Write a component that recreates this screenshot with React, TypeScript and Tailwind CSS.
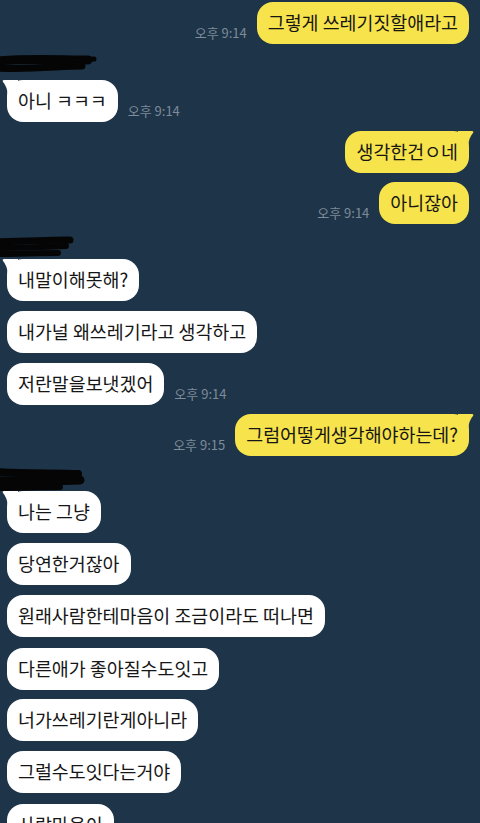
import React from 'react'

type Msg = {
  text: string
  me?: boolean
  time?: string
  tail?: boolean
  mt: number
}

const font = { fontFamily: '"Noto Sans CJK KR", "Noto Sans", sans-serif' }

const Tail = ({ me }: { me?: boolean }) =>
  me ? (
    <svg className="absolute -right-[5px] top-0" width="16" height="16" viewBox="0 0 16 16">
      <path d="M0 0 H14 Q16 0 15 2 Q11 6 10 16 H0 Z" fill="#f7e34b" />
    </svg>
  ) : (
    <svg className="absolute -left-[5px] top-0" width="16" height="16" viewBox="0 0 16 16">
      <path d="M16 0 H2 Q0 0 1 2 Q5 6 6 16 H16 Z" fill="#ffffff" />
    </svg>
  )

const Bubble = ({ m }: { m: Msg }) => (
  <div
    className={`flex items-end gap-[10px] ${m.me ? 'flex-row-reverse pr-[11px]' : 'pl-[7px]'}`}
    style={{ marginTop: m.mt }}
  >
    <div
      className={`relative flex h-[42px] items-center rounded-[16px] px-[11px] text-[18.4px] text-[#161616] ${
        m.me ? 'bg-[#f7e34b]' : 'bg-white'
      }`}
    >
      {m.tail && <Tail me={m.me} />}
      <span className="relative whitespace-nowrap">{m.text}</span>
    </div>
    {m.time && <span className="mb-[2px] text-[13px] text-[#7d8b9a]">{m.time}</span>}
  </div>
)

const Scribble = ({ variant }: { variant: number }) => {
  if (variant === 0)
    return (
      <svg width="100" height="36" viewBox="0 0 100 36" className="block">
        <path d="M-4 17 C30 14 60 16 88 16" stroke="#050505" strokeWidth="9" strokeLinecap="round" fill="none" />
        <path d="M-4 24 C30 26 60 22 82 22" stroke="#050505" strokeWidth="7" strokeLinecap="round" fill="none" />
        <path d="M70 16 L94 15" stroke="#050505" strokeWidth="5" strokeLinecap="round" />
      </svg>
    )
  if (variant === 1)
    return (
      <svg width="80" height="35" viewBox="0 0 80 35" className="block">
        <path d="M-4 18 C25 17 50 16 70 16" stroke="#050505" strokeWidth="7" strokeLinecap="round" fill="none" />
        <path d="M-4 24 C20 24 45 23 66 22" stroke="#050505" strokeWidth="6" strokeLinecap="round" fill="none" />
        <path d="M-4 30 C15 30 40 29 58 29" stroke="#050505" strokeWidth="6" strokeLinecap="round" fill="none" />
      </svg>
    )
  return (
    <svg width="90" height="35" viewBox="0 0 90 35" className="block">
      <path d="M-4 16 C25 18 55 17 78 18" stroke="#050505" strokeWidth="8" strokeLinecap="round" fill="none" />
      <path d="M-4 25 C25 26 55 25 80 24" stroke="#050505" strokeWidth="9" strokeLinecap="round" fill="none" />
      <path d="M-4 32 C20 32 40 31 60 31" stroke="#050505" strokeWidth="6" strokeLinecap="round" fill="none" />
    </svg>
  )
}

export default function App() {
  return (
    <div className="h-[823px] w-[480px] overflow-hidden bg-[#1e3448]" style={font}>
      <Bubble m={{ text: '그렇게 쓰레기짓할애라고', me: true, time: '오후 9:14', mt: 2 }} />
      <Scribble variant={0} />
      <Bubble m={{ text: '아니 ㅋㅋㅋ', tail: true, time: '오후 9:14', mt: 0 }} />
      <Bubble m={{ text: '생각한건ㅇ네', me: true, tail: true, mt: 9 }} />
      <Bubble m={{ text: '아니잖아', me: true, time: '오후 9:14', mt: 9 }} />
      <Scribble variant={1} />
      <Bubble m={{ text: '내말이해못해?', tail: true, mt: 0 }} />
      <Bubble m={{ text: '내가널 왜쓰레기라고 생각하고', mt: 10 }} />
      <Bubble m={{ text: '저란말을보냇겠어', time: '오후 9:14', mt: 10 }} />
      <Bubble m={{ text: '그럼어떻게생각해야하는데?', me: true, tail: true, time: '오후 9:15', mt: 9 }} />
      <Scribble variant={2} />
      <Bubble m={{ text: '나는 그냥', tail: true, mt: 0 }} />
      <Bubble m={{ text: '당연한거잖아', mt: 10 }} />
      <Bubble m={{ text: '원래사람한테마음이 조금이라도 떠나면', mt: 10 }} />
      <Bubble m={{ text: '다른애가 좋아질수도잇고', mt: 11 }} />
      <Bubble m={{ text: '너가쓰레기란게아니라', mt: 9 }} />
      <Bubble m={{ text: '그럴수도잇다는거야', mt: 10 }} />
      <Bubble m={{ text: '사랑마음이', mt: 11 }} />
    </div>
  )
}
